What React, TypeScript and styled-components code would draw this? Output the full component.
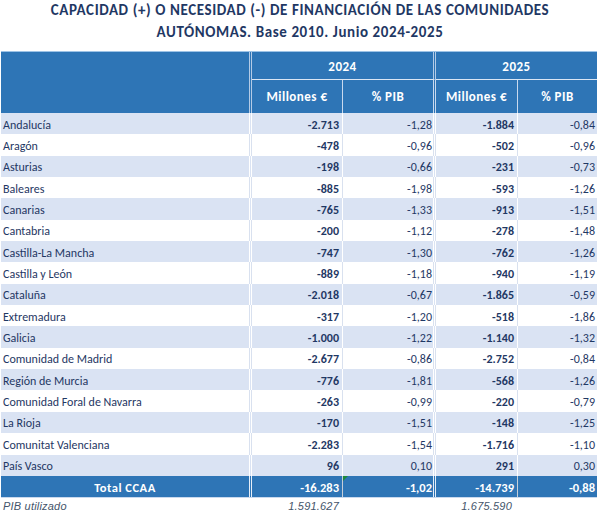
import React from "react";
import styled, { createGlobalStyle, css } from "styled-components";

const GlobalStyle = createGlobalStyle`
  html, body { margin: 0; padding: 0; background: #ffffff; }
  body { font-family: Carlito, Lato, "Liberation Sans", sans-serif; }
`;

const COLS = "251px 91px 93px 82px 79px";
const NAVY = "#1f3864";
const BLUE = "#2e75b6";
const SHADE = "#dae3f3";

type Sep = "single" | "double" | "none";

const sepBorder = (sep: Sep, color: string) => {
  if (sep === "double") return css`border-right: 3px double ${color};`;
  if (sep === "single") return css`border-right: 1px solid ${color};`;
  return css``;
};

const Page = styled.div`
  width: 600px;
  height: 515px;
  overflow: hidden;
  background: #fff;
`;

const Title = styled.h1`
  margin: 0;
  height: 51px;
  padding-top: 0;
  box-sizing: border-box;
  text-align: center;
  font-family: Carlito, Lato, "Liberation Sans", sans-serif;
  font-weight: 700;
  font-size: 15px;
  letter-spacing: 0.6px;
  line-height: 21.5px;
  color: ${NAVY};
`;

const Table = styled.div`
  margin-left: 1px;
  width: 596px;
`;

const Header = styled.div`
  display: grid;
  grid-template-columns: ${COLS};
  grid-template-rows: 28px 33px;
  background: ${BLUE};
  border-top: 1px solid #9dc3e6;
  color: #fff;
  font-weight: 700;
  font-size: 13px;
  letter-spacing: 0.5px;
`;

const HeadBlank = styled.div<{ $sep: Sep }>`
  grid-row: 1 / span 2;
  ${(p) => sepBorder(p.$sep, "#b4cbe6")}
`;

const YearCell = styled.div<{ $sep: Sep }>`
  grid-column: span 2;
  display: flex;
  align-items: center;
  justify-content: center;
  padding-top: 1px;
  border-bottom: 1px solid #dbe6f4;
  ${(p) => sepBorder(p.$sep, "#b4cbe6")}
`;

const SubCell = styled.div<{ $sep: Sep }>`
  display: flex;
  align-items: center;
  justify-content: center;
  ${(p) => sepBorder(p.$sep, "#c9d9ee")}
`;

const Row = styled.div<{ $shaded: boolean }>`
  display: grid;
  grid-template-columns: ${COLS};
  height: 21.35px;
  background: ${(p) => (p.$shaded ? SHADE : "#ffffff")};
  color: ${NAVY};
  font-size: 12px;
`;

const NameCell = styled.div<{ $line: string }>`
  display: flex;
  align-items: center;
  padding: 2px 0 0 2px;
  white-space: nowrap;
  ${(p) => sepBorder("double", p.$line)}
`;

const ValueCell = styled.div<{ $sep: Sep; $bold?: boolean; $line: string; $pad: number }>`
  display: flex;
  align-items: center;
  justify-content: flex-end;
  padding-top: 2px;
  padding-right: ${(p) => p.$pad}px;
  font-weight: ${(p) => (p.$bold ? 700 : 400)};
  white-space: nowrap;
  ${(p) => sepBorder(p.$sep, p.$line)}
`;

const TotalRow = styled.div`
  display: grid;
  grid-template-columns: ${COLS};
  height: 21.35px;
  background: ${BLUE};
  color: #fff;
  font-weight: 700;
  font-size: 12.5px;
  border-bottom: 1px solid #c9d9ee;
`;

const TotalName = styled.div`
  display: flex;
  align-items: center;
  justify-content: center;
  padding-top: 2px;
  letter-spacing: 0.5px;
  border-right: 3px double #e6eef8;
`;

const TotalValue = styled.div<{ $sep: Sep; $pad: number }>`
  position: relative;
  display: flex;
  align-items: center;
  justify-content: flex-end;
  padding-top: 2px;
  padding-right: ${(p) => p.$pad}px;
  ${(p) => sepBorder(p.$sep, p.$sep === "double" ? "#e6eef8" : "#c6ced8")}
`;

const ErrorMark = styled.span`
  position: absolute;
  left: 0;
  top: 0;
  width: 0;
  height: 0;
  border-top: 5px solid #1e8a3a;
  border-right: 5px solid transparent;
`;

const FootRow = styled.div`
  display: grid;
  grid-template-columns: ${COLS};
  height: 15px;
  font-family: "Liberation Sans", Arial, sans-serif;
  font-style: italic;
  font-size: 11px;
  letter-spacing: 0.2px;
  color: #44546a;
`;

const FootCell = styled.div<{ $align: "left" | "right"; $pad: number }>`
  display: flex;
  align-items: center;
  justify-content: ${(p) => (p.$align === "left" ? "flex-start" : "flex-end")};
  padding-top: 1px;
  padding-left: ${(p) => (p.$align === "left" ? p.$pad : 0)}px;
  padding-right: ${(p) => (p.$align === "right" ? p.$pad : 0)}px;
`;

const rows: [string, string, string, string, string][] = [
  ["Andalucía", "-2.713", "-1,28", "-1.884", "-0,84"],
  ["Aragón", "-478", "-0,96", "-502", "-0,96"],
  ["Asturias", "-198", "-0,66", "-231", "-0,73"],
  ["Baleares", "-885", "-1,98", "-593", "-1,26"],
  ["Canarias", "-765", "-1,33", "-913", "-1,51"],
  ["Cantabria", "-200", "-1,12", "-278", "-1,48"],
  ["Castilla-La Mancha", "-747", "-1,30", "-762", "-1,26"],
  ["Castilla y León", "-889", "-1,18", "-940", "-1,19"],
  ["Cataluña", "-2.018", "-0,67", "-1.865", "-0,59"],
  ["Extremadura", "-317", "-1,20", "-518", "-1,86"],
  ["Galicia", "-1.000", "-1,22", "-1.140", "-1,32"],
  ["Comunidad de Madrid", "-2.677", "-0,86", "-2.752", "-0,84"],
  ["Región de Murcia", "-776", "-1,81", "-568", "-1,26"],
  ["Comunidad Foral de Navarra", "-263", "-0,99", "-220", "-0,79"],
  ["La Rioja", "-170", "-1,51", "-148", "-1,25"],
  ["Comunitat Valenciana", "-2.283", "-1,54", "-1.716", "-1,10"],
  ["País Vasco", "96", "0,10", "291", "0,30"],
];

export default function App() {
  return (
    <Page>
      <GlobalStyle />
      <Title>
        CAPACIDAD (+) O NECESIDAD (-) DE FINANCIACIÓN DE LAS COMUNIDADES
        <br />
        AUTÓNOMAS. Base 2010. Junio 2024-2025
      </Title>
      <Table>
        <Header>
          <HeadBlank $sep="double" />
          <YearCell $sep="double">2024</YearCell>
          <YearCell $sep="none">2025</YearCell>
          <SubCell $sep="single">Millones €</SubCell>
          <SubCell $sep="double">% PIB</SubCell>
          <SubCell $sep="single">Millones €</SubCell>
          <SubCell $sep="none">% PIB</SubCell>
        </Header>
        {rows.map((r, i) => {
          const shaded = i % 2 === 0;
          const line = shaded ? "#ffffff" : "#d9e1ef";
          return (
            <Row key={r[0]} $shaded={shaded}>
              <NameCell $line={line}>{r[0]}</NameCell>
              <ValueCell $sep="single" $bold $line={line} $pad={3}>{r[1]}</ValueCell>
              <ValueCell $sep="double" $line={line} $pad={1}>{r[2]}</ValueCell>
              <ValueCell $sep="single" $bold $line={line} $pad={3}>{r[3]}</ValueCell>
              <ValueCell $sep="none" $line={line} $pad={2}>{r[4]}</ValueCell>
            </Row>
          );
        })}
        <TotalRow>
          <TotalName>Total CCAA</TotalName>
          <TotalValue $sep="single" $pad={3}>-16.283</TotalValue>
          <TotalValue $sep="double" $pad={1}>
            <ErrorMark />
            -1,02
          </TotalValue>
          <TotalValue $sep="single" $pad={3}>-14.739</TotalValue>
          <TotalValue $sep="none" $pad={2}>-0,88</TotalValue>
        </TotalRow>
        <FootRow>
          <FootCell $align="left" $pad={2}>PIB utilizado</FootCell>
          <FootCell $align="right" $pad={4}>1.591.627</FootCell>
          <FootCell $align="right" $pad={0} />
          <FootCell $align="right" $pad={6}>1.675.590</FootCell>
          <FootCell $align="right" $pad={0} />
        </FootRow>
      </Table>
    </Page>
  );
}
